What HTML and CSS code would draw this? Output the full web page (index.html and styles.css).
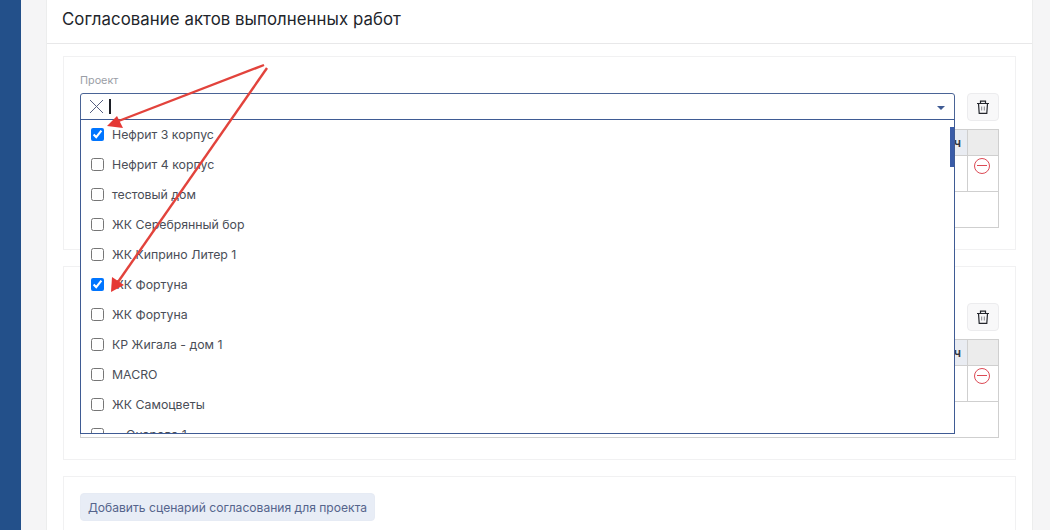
FILE: index.html
```html
<!DOCTYPE html>
<html lang="ru">
<head>
<meta charset="utf-8">
<title>Согласование актов</title>
<link rel="stylesheet" href="styles.css">
</head>
<body>
<aside class="sidebar"></aside>
<main class="main">
  <section class="card">
    <h1 class="card-title">Согласование актов выполненных работ</h1>
    <div class="card-body">
      <div class="panel panel-first">
        <div class="scenario">
          <div class="field">
            <label class="label">Проект</label>
            <div class="select">
              <svg class="clear" width="13" height="13" viewBox="0 0 13 13"><path d="M0 0l13 13M13 0L0 13" stroke="#565f80" stroke-width="1" fill="none"/></svg>
              <span class="caret"></span>
              <span class="arrow-down"></span>
              <ul class="dropdown">
                <li class="option"><input type="checkbox" checked>Нефрит 3 корпус</li>
                <li class="option"><input type="checkbox">Нефрит 4 корпус</li>
                <li class="option"><input type="checkbox">тестовый дом</li>
                <li class="option"><input type="checkbox">ЖК Серебрянный бор</li>
                <li class="option"><input type="checkbox">ЖК Киприно Литер 1</li>
                <li class="option"><input type="checkbox" checked>ЖК Фортуна</li>
                <li class="option"><input type="checkbox">ЖК Фортуна</li>
                <li class="option"><input type="checkbox">КР Жигала - дом 1</li>
                <li class="option"><input type="checkbox">MACRO</li>
                <li class="option"><input type="checkbox">ЖК Самоцветы</li>
                <li class="option"><input type="checkbox">... Очарова 1</li>
                <li class="thumb"></li>
              </ul>
            </div>
          </div>
          <button class="trash" type="button"><svg width="14" height="14" viewBox="0 0 14 14" fill="none"><path d="M1 3.500h12M4.500 3V1.200h5V3M2.500 3.500l.7 9.800h7.600l.7-9.800" stroke="#24272d" stroke-width="1.200"/><path d="M5.700 6.500v4M8.300 6.500v4" stroke="#85888e"/></svg></button>
        </div>
        <div class="grid">
          <div class="th th-wide"><span class="th-text">ч</span></div>
          <div class="th"></div>
          <div class="td td-main"></div>
          <div class="td td-action"><span class="minus"></span></div>
          <div class="td td-full"></div>
        </div>
      </div>
      <div class="panel">
        <div class="scenario">
          <div class="field">
            <label class="label">Проект</label>
            <div class="select"></div>
          </div>
          <button class="trash" type="button"><svg width="14" height="14" viewBox="0 0 14 14" fill="none"><path d="M1 3.500h12M4.500 3V1.200h5V3M2.500 3.500l.7 9.800h7.600l.7-9.800" stroke="#24272d" stroke-width="1.200"/><path d="M5.700 6.500v4M8.300 6.500v4" stroke="#85888e"/></svg></button>
        </div>
        <div class="grid">
          <div class="th th-wide"><span class="th-text">ч</span></div>
          <div class="th"></div>
          <div class="td td-main"></div>
          <div class="td td-action"><span class="minus"></span></div>
          <div class="td td-full"></div>
        </div>
      </div>
      <div class="panel panel-add">
        <button class="add" type="button">Добавить сценарий согласования для проекта</button>
      </div>
    </div>
  </section>
</main>
<svg class="annotations" width="1050" height="530" viewBox="0 0 1050 530">
  <path d="M264 65L116 122" stroke="#e2433c" stroke-width="2.400" fill="none"/>
  <path d="M107 126L117 116L123 128Z" fill="#e53935"/>
  <path d="M267 68L118 282" stroke="#e2433c" stroke-width="2.400" fill="none"/>
  <path d="M111 292L112 277L124 285Z" fill="#e53935"/>
</svg>
</body>
</html>
```
FILE: styles.css
```css
* { box-sizing: border-box; }
html, body { margin: 0; height: 530px; overflow: hidden; }
body {
  display: flex;
  background: #f5f5f6;
  font-family: Inter, "Liberation Sans", sans-serif;
  color: #3a3f4a;
  position: relative;
}
.sidebar { width: 21px; flex: none; background: #23508a; }
.main { flex: 1; padding: 0 17px 0 25px; min-width: 0; height: 530px; overflow: hidden; }
.card {
  background: #fff;
  border: 1px solid #eceded;
  border-top: 0;
  height: 560px;
}
.card-title {
  margin: 0;
  height: 44px;
  padding: 0 15px 5px;
  display: flex;
  align-items: center;
  font-size: 16.8px;
  font-weight: 400;
  letter-spacing: 0.06px;
  color: #22252b;
  border-bottom: 1px solid #e8e8e9;
}
.card-body {
  padding: 12px 16px 0;
  display: flex;
  flex-direction: column;
  gap: 16px;
}
.panel {
  height: 194px;
  border: 1px solid #f1f1f2;
  padding: 17px 16px 0;
}
.panel-add { padding-top: 16px; height: 80px; }
.scenario { display: flex; gap: 12px; align-items: flex-end; }
.field { flex: 1; min-width: 0; }
.label { display: block; font-size: 10.8px; line-height: 14px; color: #9a9ea6; margin-bottom: 5px; }
.select {
  position: relative;
  height: 27px;
  border: 1px solid #4a6496;
  border-radius: 3px 3px 0 0;
  background: #fff;
  display: flex;
  align-items: center;
  padding-left: 9px;
}
.caret { width: 2px; height: 15px; background: #1c1f26; margin-left: 6px; }
.arrow-down {
  position: absolute;
  right: 9px;
  top: 12px;
  border-left: 4px solid transparent;
  border-right: 4px solid transparent;
  border-top: 4px solid #3f5b94;
}
.dropdown {
  position: absolute;
  z-index: 5;
  top: 25px;
  left: -1px;
  right: -1px;
  height: 315px;
  margin: 0;
  padding: 0 0 0 10px;
  list-style: none;
  background: #fff;
  border: 1px solid #3f5b94;
  overflow: hidden;
}
.option {
  height: 30px;
  display: flex;
  align-items: center;
  font-size: 12.3px;
  color: #4a4e57;
}
.option:first-child { margin-top: -1px; }
.option input { margin: 0 8px 0 0; width: 13px; height: 13px; flex: none; }
.thumb {
  position: absolute;
  right: 0;
  top: 7px;
  width: 4px;
  height: 40px;
  background: #3a5ca8;
}
.trash {
  width: 32px;
  height: 28px;
  flex: none;
  padding: 0;
  display: flex;
  align-items: center;
  justify-content: center;
  background: #f8f8f9;
  border: 1px solid #ececee;
  border-radius: 4px;
  margin-bottom: -1px;
}
.grid {
  margin-top: 9px;
  display: grid;
  grid-template-columns: 1fr 30px;
  grid-template-rows: 26px 36px 35px;
  border: 1px solid #cfcfcf;
}
.th { background: #ececec; border-bottom: 1px solid #cfcfcf; }
.th-wide {
  background: #e9ecf2;
  border-right: 1px solid #cfcfcf;
  display: flex;
  align-items: center;
  justify-content: flex-end;
  padding-right: 6px;
}
.th-text { font-size: 12.3px; font-weight: 600; color: #333842; }
.td { border-bottom: 1px solid #cfcfcf; }
.td-main { border-right: 1px solid #cfcfcf; }
.td-action { display: flex; justify-content: center; align-items: flex-start; padding: 2px 3px 0 0; }
.td-full { grid-column: 1 / -1; border-bottom: 0; }
.minus {
  width: 16px;
  height: 16px;
  border: 1px solid #dc4a55;
  border-radius: 50%;
  position: relative;
}
.minus::after {
  content: "";
  position: absolute;
  left: 2px;
  right: 2px;
  top: 6px;
  height: 1px;
  background: #dc4a55;
}
.add {
  width: 295px;
  height: 28px;
  padding: 0;
  font: 12.1px Inter, "Liberation Sans", sans-serif;
  color: #55648c;
  background: #e8edf6;
  border: 1px solid #e6ebf4;
  border-radius: 4px;
}
.annotations { position: absolute; left: 0; top: 0; z-index: 10; pointer-events: none; }
```
